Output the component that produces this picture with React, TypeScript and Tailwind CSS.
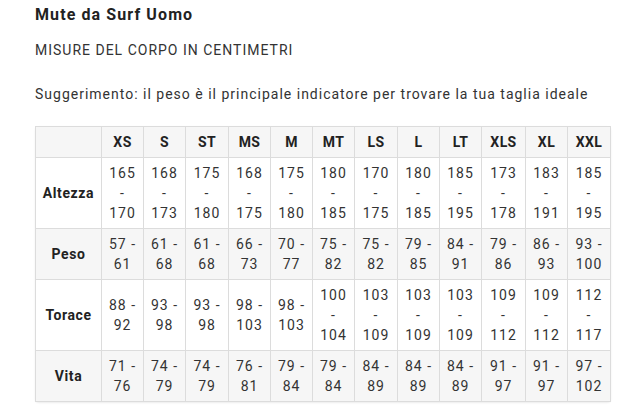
const sizes = ["XS", "S", "ST", "MS", "M", "MT", "LS", "L", "LT", "XLS", "XL", "XXL"];
const widths = [42, 42, 43, 42, 42, 42, 43, 42, 42, 44, 42, 43];

const rows: { label: string; values: string[] }[] = [
  {
    label: "Altezza",
    values: ["165 - 170", "168 - 173", "175 - 180", "168 - 175", "175 - 180", "180 - 185", "170 - 175", "180 - 185", "185 - 195", "173 - 178", "183 - 191", "185 - 195"],
  },
  {
    label: "Peso",
    values: ["57 - 61", "61 - 68", "61 - 68", "66 - 73", "70 - 77", "75 - 82", "75 - 82", "79 - 85", "84 - 91", "79 - 86", "86 - 93", "93 - 100"],
  },
  {
    label: "Torace",
    values: ["88 - 92", "93 - 98", "93 - 98", "98 - 103", "98 - 103", "100 - 104", "103 - 109", "103 - 109", "103 - 109", "109 - 112", "109 - 112", "112 - 117"],
  },
  {
    label: "Vita",
    values: ["71 - 76", "74 - 79", "74 - 79", "76 - 81", "79 - 84", "79 - 84", "84 - 89", "84 - 89", "84 - 89", "91 - 97", "91 - 97", "97 - 102"],
  },
];

export default function App() {
  return (
    <div className="min-h-[417px] bg-white pl-[35px] pt-[3px] text-[#333] font-['Roboto',sans-serif]">
      <h1 className="text-base leading-6 font-bold text-[#222] tracking-[1.1px]">Mute da Surf Uomo</h1>
      <p className="mt-[13px] text-sm leading-5 tracking-[1px]">MISURE DEL CORPO IN CENTIMETRI</p>
      <p className="mt-6 text-sm leading-5 tracking-[1px]">
        Suggerimento: il peso è il principale indicatore per trovare la tua taglia ideale
      </p>
      <table className="mt-[22px] w-[575px] table-fixed border-collapse rounded-sm text-sm leading-5 tracking-[1px] shadow-[0_1px_2px_rgba(0,0,0,0.08)]">
        <colgroup>
          <col className="w-[66px]" />
          {widths.map((w, i) => (
            <col key={i} style={{ width: w }} />
          ))}
        </colgroup>
        <thead>
          <tr className="bg-[#f6f6f6]">
            <th className="h-[31px] border border-[#dcdcdc]"></th>
            {sizes.map((s) => (
              <th key={s} className="border border-[#dcdcdc] px-1 py-[5px] text-center font-bold text-[#222] tracking-[0.4px]">
                {s}
              </th>
            ))}
          </tr>
        </thead>
        <tbody>
          {rows.map((r, i) => (
            <tr key={r.label} className={i % 2 === 1 ? "bg-[#f6f6f6]" : "bg-white"}>
              <td className="border border-[#dcdcdc] px-1 py-[5px] text-center font-bold text-[#222] tracking-[0.6px]">
                {r.label}
              </td>
              {r.values.map((v, j) => (
                <td key={j} className="border border-[#dcdcdc] px-[5px] py-[5px] text-center">
                  {v}
                </td>
              ))}
            </tr>
          ))}
        </tbody>
      </table>
    </div>
  );
}
